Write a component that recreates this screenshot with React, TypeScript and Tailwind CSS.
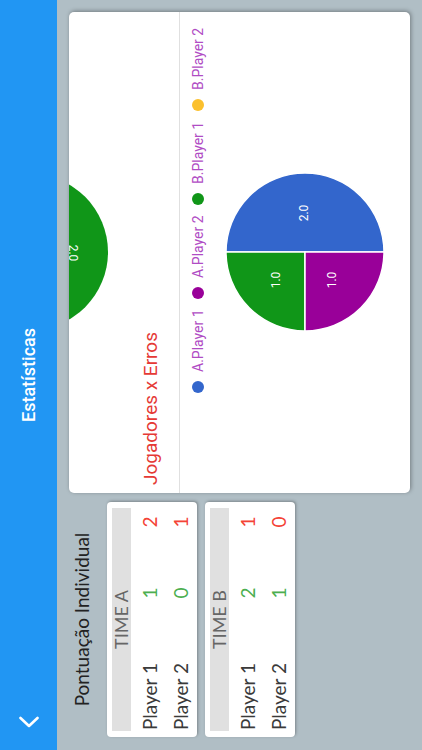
import React from "react";

type Row = { name: string; hits: number; errors: number };

const teams: { title: string; rows: Row[] }[] = [
  {
    title: "TIME A",
    rows: [
      { name: "Player 1", hits: 1, errors: 2 },
      { name: "Player 2", hits: 0, errors: 1 },
    ],
  },
  {
    title: "TIME B",
    rows: [
      { name: "Player 1", hits: 2, errors: 1 },
      { name: "Player 2", hits: 1, errors: 0 },
    ],
  },
];

const legend = [
  { label: "A.Player 1", color: "bg-[#3366cc]" },
  { label: "A.Player 2", color: "bg-[#990099]" },
  { label: "B.Player 1", color: "bg-[#109618]" },
  { label: "B.Player 2", color: "bg-[#fbc02d]" },
];

function TeamCard({ title, rows }: { title: string; rows: Row[] }) {
  return (
    <div className="bg-white rounded-[4px] shadow-[1px_1px_3px_rgba(0,0,0,0.3)] pt-[5px] px-[6px] pb-[1px] font-['Lato',sans-serif]">
      <div className="h-[19px] bg-[#e0e0e0] text-[18px] leading-[19px] text-center text-[#666666]">
        {title}
      </div>
      <div className="mt-[3px]">
        {rows.map((r) => (
          <div key={r.name} className="flex items-center h-[31px] leading-[31px] text-[19px]">
            <span className="w-[128px] pl-[1px] text-[#3a3a3a]">{r.name}</span>
            <span className="w-[20px] text-center text-[#4caf50]">{r.hits}</span>
            <span className="ml-auto w-[20px] mr-[4px] text-center text-[#f44336]">{r.errors}</span>
          </div>
        ))}
      </div>
    </div>
  );
}

function Pie() {
  return (
    <svg width="160" height="160" viewBox="0 0 160 160">
      <path d="M80 80 L80 1 A79 79 0 0 1 80 159 Z" fill="#3366cc" stroke="#fff" strokeWidth="1.5" />
      <path d="M80 80 L80 1 A79 79 0 0 0 1 80 Z" fill="#109618" stroke="#fff" strokeWidth="1.5" />
      <path d="M80 80 L1 80 A79 79 0 0 0 80 159 Z" fill="#990099" stroke="#fff" strokeWidth="1.5" />
      <g fill="#fff" fontSize="12" fontFamily="Roboto, sans-serif" textAnchor="middle" dominantBaseline="middle">
        <text x="119" y="80">2.0</text>
        <text x="52" y="52">1.0</text>
        <text x="52" y="108">1.0</text>
      </g>
    </svg>
  );
}

export default function App() {
  return (
    <div className="w-[422px] h-[750px] overflow-hidden bg-[#b0bec5]">
      <div className="w-[750px] h-[422px] origin-top-left -rotate-90 translate-y-[750px] flex flex-col bg-[#b0bec5] font-['Roboto',sans-serif]">
        <header className="h-[57px] shrink-0 bg-[#2196f3] grid grid-cols-[58px_1fr_58px] items-center">
          <button className="flex items-center justify-center h-full">
            <svg width="20" height="20" viewBox="0 0 20 20" fill="none">
              <polyline points="13,1.5 5,10 13,18.5" stroke="#fff" strokeWidth="2.6" strokeLinecap="round" strokeLinejoin="round" />
            </svg>
          </button>
          <h1 className="text-center text-white text-[18px] font-medium">Estatísticas</h1>
          <div />
        </header>

        <main className="flex-1 flex gap-[9px] pl-[13px] pr-[12px] pt-[12px]">
          <section className="w-[235px] flex flex-col">
            <h2 className="text-center text-[19px] leading-[26px] text-[#222] font-['Lato',sans-serif] mb-[12px]">
              Pontuação Individual
            </h2>
            <div className="flex flex-col gap-[8px]">
              {teams.map((t) => (
                <TeamCard key={t.title} title={t.title} rows={t.rows} />
              ))}
            </div>
          </section>

          <section className="w-[481px] h-[341px] bg-white rounded-[5px] shadow-[1px_1px_4px_rgba(0,0,0,0.35)] overflow-hidden flex flex-col">
            <div className="relative h-[111px] shrink-0 border-b border-[#e0e0e0] flex flex-col justify-end px-[8px] pb-[16px]">
              <svg className="absolute left-[163px] top-0" width="156" height="40" viewBox="0 0 156 40">
                <circle cx="78" cy="-39" r="78" fill="#109618" />
                <text
                  x="77"
                  y="3"
                  transform="rotate(180 77 3)"
                  fill="#fff"
                  fontSize="12"
                  fontFamily="Roboto, sans-serif"
                  textAnchor="middle"
                  dominantBaseline="middle"
                >
                  2.0
                </text>
              </svg>
              <h3 className="text-[19px] leading-[25px] text-[#e53935]">Jogadores x Erros</h3>
            </div>
            <div className="flex pl-[100px] mt-[11px] h-[14px] items-center">
              {legend.map((l) => (
                <div key={l.label} className="w-[94px] shrink-0 flex items-center gap-[9px]">
                  <span className={`w-[12px] h-[12px] rounded-full shrink-0 ${l.color}`} />
                  <span className="text-[14px] leading-[14px] text-[#b04cc4] whitespace-nowrap">{l.label}</span>
                </div>
              ))}
            </div>
            <div className="flex justify-center mt-[20px] pl-[1px]">
              <Pie />
            </div>
          </section>
        </main>
      </div>
    </div>
  );
}
